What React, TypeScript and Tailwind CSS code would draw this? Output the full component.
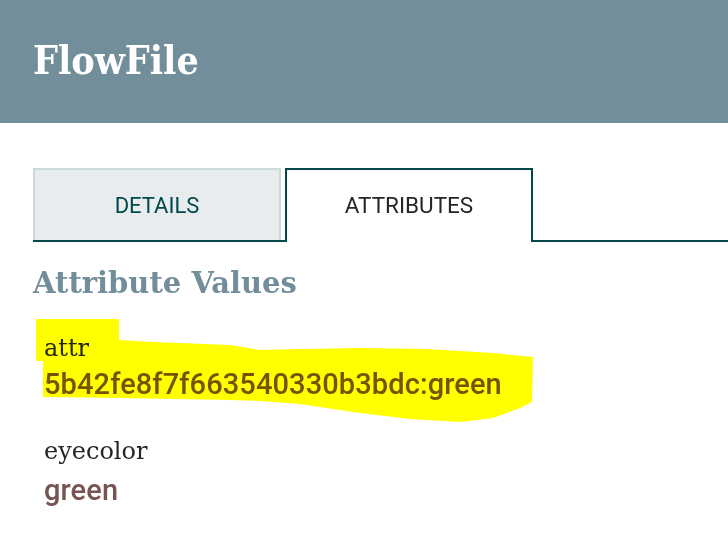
import React from "react";

const SLAB = "font-['DejaVu_Serif',serif]";
const SLAB_CONDENSED = "font-['DejaVu_Serif_Condensed','DejaVu_Serif',serif]";
const SANS = "font-['Roboto',sans-serif]";

const attributes = [
  { name: "attr", value: "5b42fe8f7f663540330b3bdc:green" },
  { name: "eyecolor", value: "green" },
];

// hand-drawn marker stroke over the first attribute
const HIGHLIGHT =
  "36,319 119,319 119,340 153,342 230,345 260,350 300,349 360,348 427,349 493,353 533,357 532,402 520,408 493,418 460,422 410,419 360,413 300,404 260,401 230,400 120,398 43,397 43,361 36,361";

export default function App() {
  return (
    <div className="relative w-[728px] h-[535px] overflow-hidden bg-white">
      <header className="h-[123px] bg-[#728e9b] pl-[33px] pt-[41px]">
        <h1 className={`${SLAB_CONDENSED} text-[39px] leading-[39px] font-bold text-white`}>FlowFile</h1>
      </header>

      <div className="pl-[33px]">
        <div className="mt-[45px] flex items-start border-b-2 border-[#004849]">
          <button
            className={`${SANS} w-[248px] h-[72px] flex items-center justify-center bg-[#e8ecef] border-2 border-b-0 border-[#ccdadb] text-[22px] text-[#004849]`}
          >
            DETAILS
          </button>
          <button
            className={`${SANS} relative ml-[4px] -mb-[2px] w-[248px] h-[74px] flex items-center justify-center bg-white border-2 border-b-0 border-[#004849] text-[22.5px] text-[#262626]`}
          >
            ATTRIBUTES
          </button>
        </div>

        <h2 className={`${SLAB} mt-[26px] text-[29px] leading-[30px] font-bold text-[#728e9b]`}>
          Attribute Values
        </h2>

        <div className="pl-[11px]">
          <div className="mt-[39px]">
            <div className={`${SLAB} text-[24px] leading-[22px] text-[#262626]`}>{attributes[0].name}</div>
            <div className={`${SANS} mt-[11px] text-[29px] leading-[28px] tracking-[0.1px] font-medium text-[#775351]`}>
              {attributes[0].value}
            </div>
          </div>
          <div className="mt-[42px]">
            <div className={`${SLAB} text-[24px] leading-[22px] text-[#262626]`}>{attributes[1].name}</div>
            <div className={`${SANS} mt-[14px] text-[29px] leading-[28px] tracking-[0.1px] font-medium text-[#775351]`}>
              {attributes[1].value}
            </div>
          </div>
        </div>
      </div>

      <svg className="absolute inset-0 w-full h-full pointer-events-none mix-blend-multiply" viewBox="0 0 728 535">
        <polygon points={HIGHLIGHT} fill="#ffff00" />
      </svg>
    </div>
  );
}
